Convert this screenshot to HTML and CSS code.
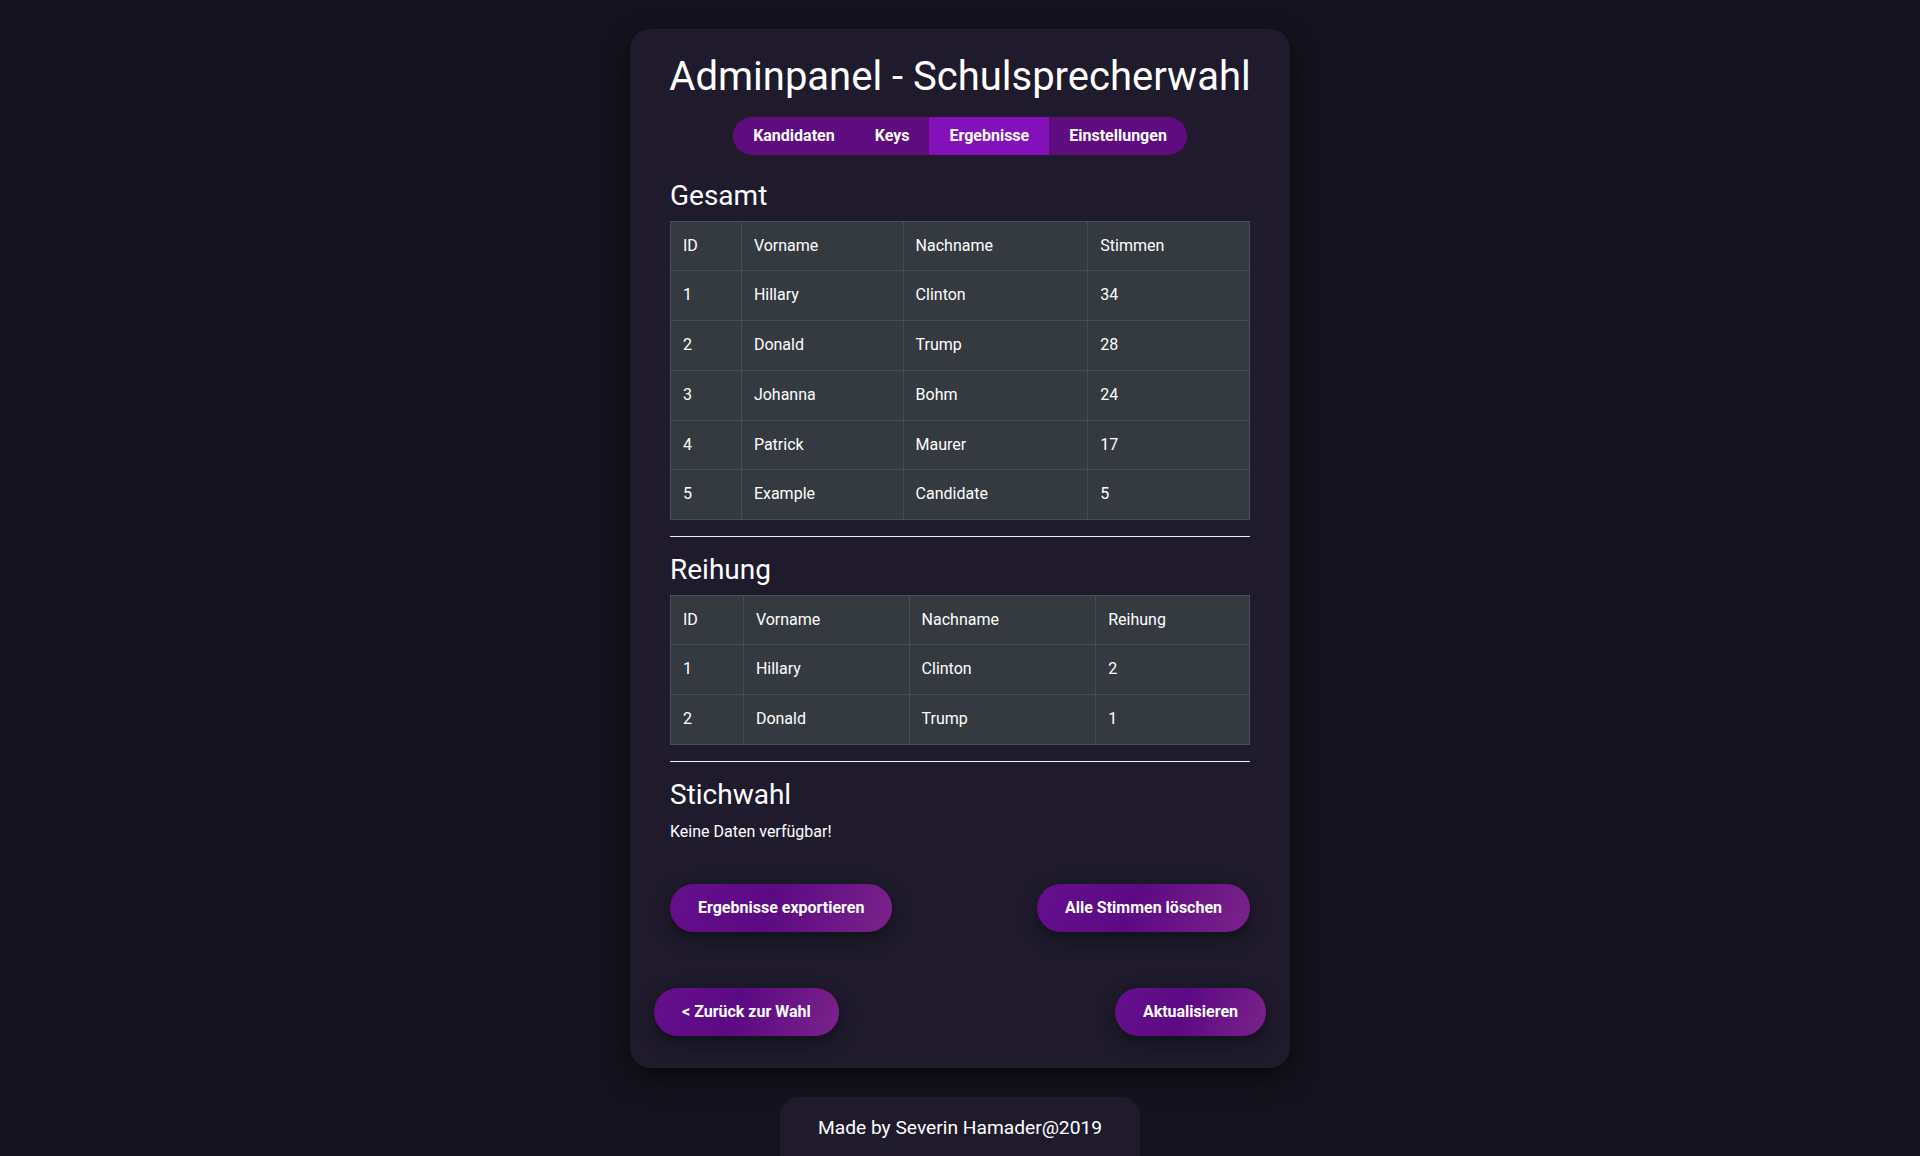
FILE: index.html
```html
<!DOCTYPE html>
<html lang="de">
<head>
<meta charset="utf-8">
<title>Adminpanel - Schulsprecherwahl</title>
<link rel="stylesheet" href="styles.css">
</head>
<body>
<div class="page">
  <main class="card">
    <div class="inner">
      <h1 class="title">Adminpanel - Schulsprecherwahl</h1>
      <div class="tabs-wrap">
        <nav class="tabs">
          <a class="tab">Kandidaten</a>
          <a class="tab">Keys</a>
          <a class="tab active">Ergebnisse</a>
          <a class="tab">Einstellungen</a>
        </nav>
      </div>

      <section class="section first">
        <h3 class="heading">Gesamt</h3>
        <table class="data t1">
          <colgroup><col class="c1"><col class="c2"><col class="c3"><col class="c4"></colgroup>
          <tr><td>ID</td><td>Vorname</td><td>Nachname</td><td>Stimmen</td></tr>
          <tr><td>1</td><td>Hillary</td><td>Clinton</td><td>34</td></tr>
          <tr><td>2</td><td>Donald</td><td>Trump</td><td>28</td></tr>
          <tr><td>3</td><td>Johanna</td><td>Bohm</td><td>24</td></tr>
          <tr><td>4</td><td>Patrick</td><td>Maurer</td><td>17</td></tr>
          <tr><td>5</td><td>Example</td><td>Candidate</td><td>5</td></tr>
        </table>
      </section>
      <hr class="rule">
      <section class="section">
        <h3 class="heading">Reihung</h3>
        <table class="data t2">
          <colgroup><col class="c1"><col class="c2"><col class="c3"><col class="c4"></colgroup>
          <tr><td>ID</td><td>Vorname</td><td>Nachname</td><td>Reihung</td></tr>
          <tr><td>1</td><td>Hillary</td><td>Clinton</td><td>2</td></tr>
          <tr><td>2</td><td>Donald</td><td>Trump</td><td>1</td></tr>
        </table>
      </section>
      <hr class="rule">
      <section class="section">
        <h3 class="heading">Stichwahl</h3>
        <p class="note">Keine Daten verfügbar!</p>
      </section>

      <div class="actions">
        <button class="btn">Ergebnisse exportieren</button>
        <button class="btn">Alle Stimmen löschen</button>
      </div>
    </div>
    <div class="actions bottom">
      <button class="btn">&lt; Zurück zur Wahl</button>
      <button class="btn">Aktualisieren</button>
    </div>
  </main>
  <footer class="footer">Made by Severin Hamader@2019</footer>
</div>
</body>
</html>
```
FILE: styles.css
```css
html, body {
  margin: 0;
  padding: 0;
  background: #15131e;
  color: #fff;
  font-family: Roboto, "Liberation Sans", Arial, sans-serif;
  font-size: 16px;
  line-height: 1.5;
}

.page {
  display: flex;
  flex-direction: column;
  align-items: center;
  padding-top: 29px;
  min-height: 1156px;
  box-sizing: border-box;
  overflow: hidden;
}

.card {
  width: 660px;
  box-sizing: border-box;
  background: #1f1b2d;
  border-radius: 20px;
  padding: 24px 24px 32px;
  box-shadow: 0 10px 28px rgba(0, 0, 0, 0.6);
}

.inner {
  padding: 0 16px;
}

.title {
  margin: 0 -24px 16px;
  font-size: 40px;
  font-weight: 400;
  line-height: 1.2;
  text-align: center;
  white-space: nowrap;
}

.tabs-wrap {
  display: flex;
  justify-content: center;
}

.tabs {
  display: inline-flex;
  background: #5e0c80;
  border-radius: 19px;
  overflow: hidden;
}

.tab {
  padding: 8px 20px;
  font-size: 16px;
  font-weight: 700;
  line-height: 22px;
  color: #fff;
  cursor: pointer;
}

.tab.active {
  background: #8410ba;
}

.section.first {
  margin-top: 24px;
}

.heading {
  margin: 0 0 8px;
  font-size: 28px;
  font-weight: 400;
  line-height: 1.2;
}

.data {
  width: 100%;
  border-collapse: collapse;
  background: #343a40;
  margin-bottom: 16px;
}

.data td {
  border: 1px solid #454d55;
  padding: 12px 12px 12.75px;
  line-height: 24px;
  vertical-align: top;
  text-align: left;
}

.t1 .c1 { width: 71px; }
.t1 .c2 { width: 162px; }
.t1 .c3 { width: 185px; }
.t1 .c4 { width: 162px; }

.t2 .c1 { width: 73px; }
.t2 .c2 { width: 166px; }
.t2 .c3 { width: 187px; }
.t2 .c4 { width: 154px; }

.rule {
  border: 0;
  border-top: 1px solid #f2f2f2;
  margin: 16px 0;
  height: 0;
}

.note {
  margin: 0 0 16px;
  line-height: 24px;
}

.actions {
  display: flex;
  justify-content: space-between;
  margin-top: 40px;
}

.actions.bottom {
  margin-top: 56px;
}

.btn {
  border: 0;
  border-radius: 24px;
  padding: 12px 28px;
  font-family: Roboto, "Liberation Sans", Arial, sans-serif;
  font-size: 16px;
  font-weight: 700;
  line-height: 24px;
  color: #fff;
  background: linear-gradient(110deg, #650f8e 0%, #5c0a83 45%, #7b238b 100%);
  box-shadow: 0 6px 20px rgba(0, 0, 0, 0.45);
  cursor: pointer;
}

.footer {
  margin-top: 29px;
  padding: 16px 38px 30px;
  background: #1f1b2d;
  border-radius: 20px;
  font-size: 19.2px;
  line-height: 29px;
}
```
